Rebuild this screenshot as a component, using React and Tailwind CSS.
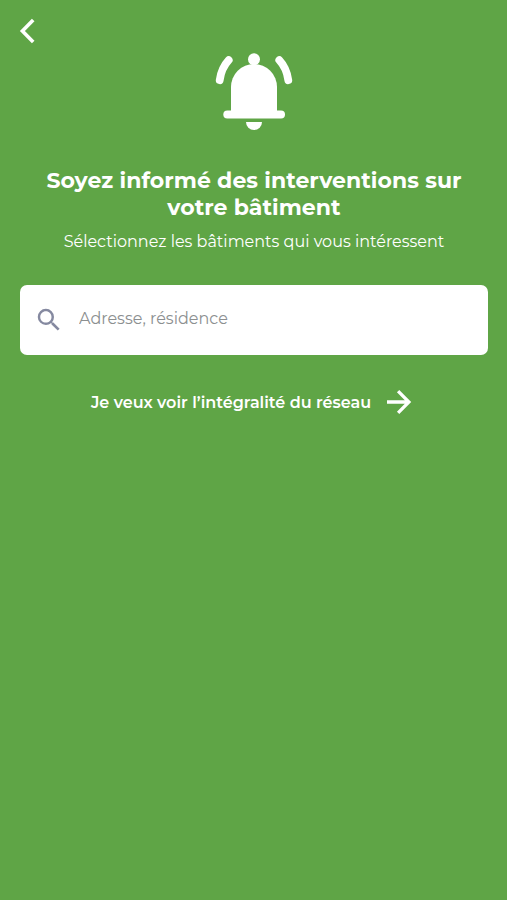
import { useState } from "react";
import { MdSearch } from "react-icons/md";

const BackIcon = () => (
  <svg
    viewBox="0 0 16 26"
    className="w-4 h-[26px]"
    fill="none"
    stroke="currentColor"
    strokeWidth="3.6"
  >
    <path d="M14.2 2 L3.4 13 L14.2 24" />
  </svg>
);

const ArrowIcon = () => (
  <svg
    viewBox="0 0 36 36"
    className="w-9 h-9"
    fill="none"
    stroke="currentColor"
    strokeWidth="3.3"
  >
    <path d="M6 18H28M17.1 7.2L27.9 18L17.1 28.8" />
  </svg>
);

const BellIcon = () => (
  <svg viewBox="0 0 80 80" className="w-20 h-20" fill="currentColor">
    <circle cx="40" cy="9.2" r="6" />
    <path d="M17 63V37a23 23 0 0 1 46 0v26z" />
    <rect x="9.3" y="60.5" width="61.7" height="8" rx="4" />
    <path d="M32 72h16a8 8 0 0 1-16 0z" />
    <path
      d="M14.7 10.2C9.3 16 6.8 22 5.7 30.2M65.3 10.2C70.7 16 73.2 22 74.3 30.2"
      fill="none"
      stroke="currentColor"
      strokeWidth="7.8"
      strokeLinecap="round"
    />
  </svg>
);

const App = () => {
  const [search, setSearch] = useState("");

  return (
    <div className="min-h-screen bg-[#5fa546] text-white font-['Montserrat','Inter',sans-serif]">
      {/* Header */}
      <header className="flex h-[50px] pt-[18px] pl-[19px]">
        <button type="button" aria-label="Retour" className="self-start">
          <BackIcon />
        </button>
      </header>

      <main className="flex flex-col items-center pl-[21px] pr-5">
        <BellIcon />

        <h1 className="mt-[37px] text-center text-[22px] leading-[27px] font-bold whitespace-nowrap">
          <span className="block tracking-[0.04px]">
            Soyez informé des interventions sur
          </span>
          <span className="block tracking-[0.04px]">votre bâtiment</span>
        </h1>
        <p className="mt-[9px] text-[16px] leading-6 whitespace-nowrap">
          Sélectionnez les bâtiments qui vous intéressent
        </p>

        {/* Search */}
        <label className="mt-[31px] flex w-[468px] h-[70px] items-center rounded-[7px] bg-white pl-[14px]">
          <MdSearch className="w-[30px] h-[30px] shrink-0 text-[#8589a0]" />
          <input
            type="text"
            value={search}
            onChange={(e) => setSearch(e.target.value)}
            placeholder="Adresse, résidence"
            className="ml-[15px] mb-0.5 flex-1 text-[16px] text-[#444] placeholder:text-[#8c8f90] outline-none"
          />
        </label>

        <button
          type="button"
          className="mt-[29px] flex items-center gap-[10px] text-[16px] font-semibold whitespace-nowrap"
        >
          <span className="pt-px">Je veux voir l’intégralité du réseau</span>
          <ArrowIcon />
        </button>
      </main>
    </div>
  );
};

export default App;
